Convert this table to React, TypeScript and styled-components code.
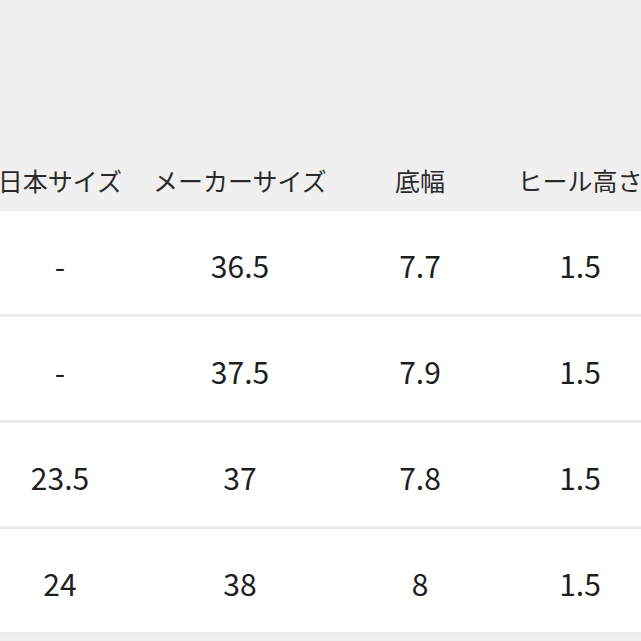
import React from "react";
import styled, { createGlobalStyle } from "styled-components";

const GlobalStyle = createGlobalStyle`
  html, body {
    margin: 0;
    padding: 0;
    background: #f0f0f0;
    overflow: hidden;
  }
  body {
    font-family: "Noto Sans CJK JP", "Noto Sans", sans-serif;
  }
`;

const Page = styled.div`
  width: 641px;
  height: 641px;
  background: #f0f0f0;
  overflow: hidden;
  padding-top: 150px;
  box-sizing: border-box;
`;

const Table = styled.div`
  width: 680px;
  margin-left: -30px;
  display: flex;
  flex-direction: column;
`;

const Row = styled.div<{ $header?: boolean }>`
  display: grid;
  grid-template-columns: 180px 180px 180px 140px;
  align-items: center;
  height: ${(p) => (p.$header ? "61px" : "103px")};
  background: ${(p) => (p.$header ? "#f0f0f0" : "#ffffff")};
  border-bottom: ${(p) => (p.$header ? "none" : "3px solid #ebebeb")};
`;

const Cell = styled.div<{ $header?: boolean }>`
  text-align: center;
  white-space: nowrap;
  font-size: ${(p) => (p.$header ? "25px" : "30px")};
  color: ${(p) => (p.$header ? "#2a2a2a" : "#1e1e1e")};
  font-weight: 400;
  line-height: 1;
  padding-top: ${(p) => (p.$header ? "0" : "4px")};
`;

const headers = ["日本サイズ", "メーカーサイズ", "底幅", "ヒール高さ"];
const rows = [
  ["-", "36.5", "7.7", "1.5"],
  ["-", "37.5", "7.9", "1.5"],
  ["23.5", "37", "7.8", "1.5"],
  ["24", "38", "8", "1.5"],
];

export default function App() {
  return (
    <>
      <GlobalStyle />
      <Page>
        <Table>
          <Row $header>
            {headers.map((h) => (
              <Cell $header key={h}>
                {h}
              </Cell>
            ))}
          </Row>
          {rows.map((r, i) => (
            <Row key={i}>
              {r.map((c, j) => (
                <Cell key={j}>{c}</Cell>
              ))}
            </Row>
          ))}
        </Table>
      </Page>
    </>
  );
}
